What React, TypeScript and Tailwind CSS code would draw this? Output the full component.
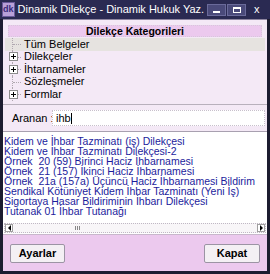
function TreeRow({ label, plus, selected }: { label: string; plus?: boolean; selected?: boolean }) {
  return (
    <div className={`flex items-center h-[12.5px] ${selected ? "bg-[#e6e3e0]" : ""}`}>
      <div className="relative w-[16px] h-full flex items-center justify-center">
        <div className="absolute left-[7px] top-0 bottom-0 border-l border-dotted border-[#b0a8b0]" />
        <div className="absolute left-[8px] right-0 top-1/2 border-t border-dotted border-[#b0a8b0]" />
        {plus && (
          <div className="relative z-10 w-[9px] h-[9px] bg-white border border-[#8c8c8c] flex items-center justify-center">
            <div className="absolute w-[5px] h-px bg-black" />
            <div className="absolute w-px h-[5px] bg-black" />
          </div>
        )}
      </div>
      <span className="pl-[3px] text-[11px] leading-none text-black">{label}</span>
    </div>
  );
}

const items = [
  "Kidem ve İhbar Tazminatı (iş) Dilekçesi",
  "Kidem ve İhbar Tazminatı Dilekçesi-2",
  "Örnek  20 (59) Birinci Haciz İhbarnamesi",
  "Örnek  21 (157) İkinci Haciz İhbarnamesi",
  "Örnek  21a (157a) Üçüncü Haciz İhbarnamesi Bildirim",
  "Sendikal Kötüniyet Kidem İhbar Tazminatı (Yeni İş)",
  "Sigortaya Hasar Bildiriminin İhbarı Dilekçesi",
  "Tutanak 01 İhbar Tutanağı",
];

export default function App() {
  return (
    <div className="w-[270px] h-[274px] bg-[#1c1c30] p-[3px] pt-0 flex flex-col font-['Liberation_Sans',Arial,sans-serif] overflow-hidden">
      {/* title bar */}
      <div className="h-[19px] flex items-center gap-[3px] bg-[#2a2a52] -mx-[3px] px-[2px]">
        <div className="w-[15px] h-[15px] bg-[#b8a0d8] border border-[#6a5a9a] flex items-center justify-center">
          <span className="text-[9px] font-bold text-[#3a2a7a] leading-none">dk</span>
        </div>
        <span className="text-[11px] text-white leading-none whitespace-nowrap">Dinamik Dilekçe - Dinamik Hukuk Yaz.</span>
        <div className="ml-auto flex items-center gap-[1px] pr-[6px]">
          <div className="w-[19px] h-[12px] bg-[#4a4a7a] border border-[#6a6a9a] flex items-end justify-center pb-[2px]">
            <div className="w-[7px] h-[2px] bg-white" />
          </div>
          <div className="w-[19px] h-[12px] bg-[#4a4a7a] border border-[#6a6a9a] flex items-center justify-center">
            <div className="w-[8px] h-[6px] border border-white border-t-2" />
          </div>
          <div className="w-[19px] h-[12px] flex items-center justify-center text-white text-[11px] leading-none">x</div>
        </div>
      </div>

      {/* body */}
      <div className="flex-1 bg-[#f4e9f6] flex flex-col border-t border-[#8e86a0]">
        <div className="mx-[5px] mt-[5px] h-[12px] bg-[#ecc9ee] border border-dotted border-[#d8c8dc] flex items-center justify-center">
          <span className="text-[10.5px] font-bold text-black leading-none">Dilekçe Kategorileri</span>
        </div>
        <div className="mx-[2px] mt-[1px] h-[65px] flex flex-col">
          <TreeRow label="Tüm Belgeler" selected />
          <TreeRow label="Dilekçeler" plus />
          <TreeRow label="İhtarnameler" plus />
          <TreeRow label="Sözleşmeler" />
          <TreeRow label="Formlar" plus />
        </div>
        <div className="mt-[1px] border-t border-[#b8b0bc]" />
        <div className="flex items-center mt-[5px] h-[16px] pr-[2px]">
          <span className="w-[49px] pl-[9px] text-[11px] text-black leading-none whitespace-nowrap">Aranan :</span>
          <div className="flex-1 h-full bg-white border border-dotted border-[#c8c0cc] flex items-center pl-[3px]">
            <span className="text-[11px] text-black leading-none">ihb</span>
            <div className="w-px h-[11px] bg-black" />
          </div>
        </div>
        <div className="mt-[5px] h-[103px] bg-white border-t border-[#a8a0b0] flex flex-col">
          <div className="flex-1 pt-[4px] pl-[1px] overflow-hidden">
            {items.map((t) => (
              <div key={t} className="h-[10px] text-[10.5px] leading-[10px] text-[#1c1c9c] whitespace-pre">
                {t}
              </div>
            ))}
          </div>
          <div className="h-[10px] mx-[1px] mb-[1px] flex items-stretch border border-dotted border-[#c0b8c4] bg-[#f8f6f8]">
            <div className="w-[8px] bg-white border border-[#a0a0a0] flex items-center justify-center">
              <div className="w-0 h-0 border-y-[3px] border-y-transparent border-r-[3px] border-r-black" />
            </div>
            <div className="flex-1 flex items-center pl-[62px]">
              <div className="flex gap-[1px]">
                <div className="w-px h-[4px] bg-[#888]" />
                <div className="w-px h-[4px] bg-[#888]" />
                <div className="w-px h-[4px] bg-[#888]" />
              </div>
            </div>
            <div className="w-[8px] bg-white border border-[#a0a0a0] flex items-center justify-center">
              <div className="w-0 h-0 border-y-[3px] border-y-transparent border-l-[3px] border-l-black" />
            </div>
          </div>
        </div>
        <div className="flex-1 bg-[#ecc9ee] border-t border-[#c8b8cc] flex items-center justify-between px-[7px]">
          <button className="w-[55px] h-[19px] bg-[#f4f0f4] border border-[#9c94a4] rounded-[2px] text-[11px] font-bold text-black leading-none">
            Ayarlar
          </button>
          <button className="w-[56px] h-[19px] bg-[#f4f0f4] border border-[#9c94a4] rounded-[2px] text-[11px] font-bold text-black leading-none">
            Kapat
          </button>
        </div>
      </div>
    </div>
  );
}
